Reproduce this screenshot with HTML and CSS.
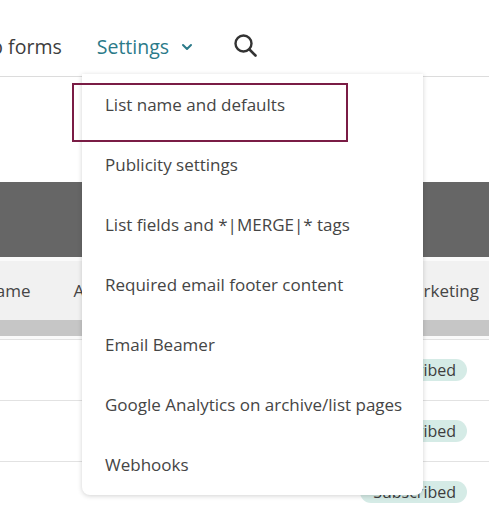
FILE: index.html
```html
<!DOCTYPE html>
<html>
<head>
<meta charset="utf-8">
<link rel="stylesheet" href="styles.css">
</head>
<body>
<div class="page">
  <nav class="nav">
    <span class="nav-item clipped">Signup forms</span>
    <span class="nav-item active">Settings
      <svg class="chev" width="12" height="8" viewBox="0 0 12 8"><path d="M2 2 L6 6 L10 2" fill="none" stroke="#2b7a89" stroke-width="2" stroke-linecap="round" stroke-linejoin="round"/></svg>
    </span>
    <svg class="search" width="25" height="25" viewBox="0 0 25 25"><circle cx="10.5" cy="10.5" r="8" fill="none" stroke="#333" stroke-width="2.4"/><path d="M16.5 16.5 L22.5 22.5" stroke="#333" stroke-width="2.6" stroke-linecap="round"/></svg>
  </nav>
  <div class="spacer"></div>
  <div class="band"></div>
  <div class="thead">
    <span class="th th-name">Name</span>
    <span class="th th-addr">Address</span>
    <span class="th th-mkt">Email Marketing</span>
  </div>
  <div class="subband"></div>
  <div class="row"><span class="badge">Subscribed</span></div>
  <div class="row"><span class="badge">Subscribed</span></div>
  <div class="row"><span class="badge">Subscribed</span></div>

  <div class="dropdown">
    <div class="focus"></div>
    <div class="item">List name and defaults</div>
    <div class="item">Publicity settings</div>
    <div class="item">List fields and *|MERGE|* tags</div>
    <div class="item">Required email footer content</div>
    <div class="item">Email Beamer</div>
    <div class="item">Google Analytics on archive/list pages</div>
    <div class="item">Webhooks</div>
  </div>
</div>
</body>
</html>
```
FILE: styles.css
```css
html, body {
  margin: 0;
  padding: 0;
  background: #fff;
  overflow: hidden;
}
body {
  font-family: "Open Sans", "Noto Sans", sans-serif;
  color: #454545;
}
.page {
  position: relative;
  width: 489px;
  height: 520px;
  overflow: hidden;
}
.nav {
  display: flex;
  align-items: center;
  height: 77px;
  padding-top: 20px;
  box-sizing: border-box;
  border-bottom: 1px solid #dcdcdc;
  font-size: 19.5px;
}
.nav-item {
  display: flex;
  align-items: center;
  white-space: nowrap;
  color: #3d3d3d;
  padding-bottom: 4px;
}
.clipped {
  margin-left: -59px;
}
.active {
  margin-left: 35px;
  color: #2b7a89;
}
.chev {
  margin-left: 12px;
  margin-top: 2px;
}
.search {
  margin-left: 40px;
  margin-bottom: 6px;
}
.spacer {
  height: 105px;
}
.band {
  height: 75px;
  background: #666666;
  border-bottom: 4px solid #fafafa;
}
.thead {
  display: flex;
  align-items: center;
  height: 59px;
  background: #f1f1f1;
  font-size: 17px;
  color: #454545;
  position: relative;
}
.th {
  white-space: nowrap;
}
.th-name { margin-left: -17px; }
.th-addr { margin-left: 43px; }
.th-mkt { margin-left: auto; margin-right: 10px; }
.subband {
  height: 16px;
  background: #c6c6c6;
  border-bottom: 3px solid #fafafa;
}
.row {
  display: flex;
  align-items: center;
  justify-content: flex-end;
  height: 60px;
  border-top: 1px solid #e2e2e2;
  padding-right: 22px;
}
.badge {
  background: #d5ebe6;
  color: #3d3d3d;
  font-size: 16px;
  line-height: 22px;
  padding: 0 11px 0 13px;
  border-radius: 11px;
}
.dropdown {
  position: absolute;
  left: 82px;
  top: 74px;
  width: 341px;
  height: 421px;
  background: #fff;
  border-radius: 0 0 8px 8px;
  box-shadow: 0 1px 5px rgba(0,0,0,0.18);
  padding-top: 0;
  box-sizing: border-box;
}
.item {
  height: 60px;
  display: flex;
  align-items: center;
  padding-left: 23px;
  font-size: 17px;
  color: #454545;
  white-space: nowrap;
}
.focus {
  position: absolute;
  left: -10px;
  top: 9px;
  width: 276px;
  height: 59px;
  border: 2px solid #7a1c45;
  box-sizing: border-box;
}
```
